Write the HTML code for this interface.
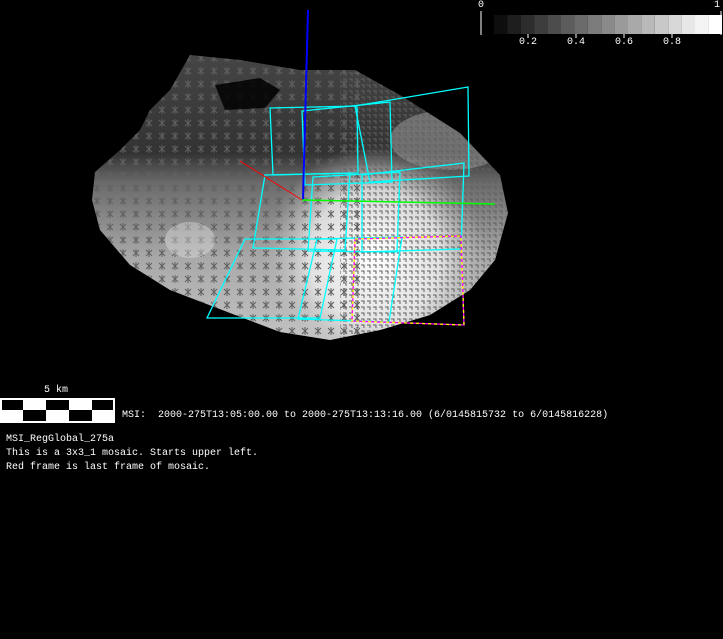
<!DOCTYPE html>
<html><head><meta charset="utf-8"><style>
html,body{margin:0;padding:0;background:#000;width:723px;height:639px;overflow:hidden}
.t{position:absolute;color:#fff;font-family:"Liberation Mono",monospace;font-size:10px;white-space:pre;line-height:14px}
</style></head><body>
<svg width="723" height="639" style="position:absolute;left:0;top:0">
<defs>
<linearGradient id="g" x1="0" y1="0" x2="0" y2="1">
<stop offset="0" stop-color="#464646"/>
<stop offset="0.35" stop-color="#333"/>
<stop offset="0.45" stop-color="#6a6a6a"/>
<stop offset="0.7" stop-color="#a8a8a8"/>
<stop offset="1" stop-color="#c4c4c4"/>
</linearGradient>
<radialGradient id="rg" cx="0.5" cy="0.55" r="0.5">
<stop offset="0" stop-color="#fff" stop-opacity="1"/>
<stop offset="0.6" stop-color="#eee" stop-opacity="0.8"/>
<stop offset="1" stop-color="#bbb" stop-opacity="0"/>
</radialGradient>
<pattern id="st" width="13" height="13" patternUnits="userSpaceOnUse">
<path d="M3 3L9 9M3 9L9 3M6 2V10" stroke="#606060" stroke-width="1"/>
</pattern>
<pattern id="st2" width="6" height="6" patternUnits="userSpaceOnUse">
<path d="M1 1H4V4" stroke="#606060" stroke-width="1" fill="none"/>
</pattern>
<clipPath id="cp"><path d="M170,90 L190,55 L240,60 L300,70 L355,70 L400,95 L460,133 L500,175 L508,213 L495,260 L470,290 L430,315 L380,330 L330,340 L280,332 L230,313 L170,290 L130,265 L100,230 L92,200 L95,172 L120,150 L140,130 L150,110 Z"/></clipPath>
</defs>
<g clip-path="url(#cp)">
<rect x="90" y="50" width="425" height="295" fill="url(#g)"/>
<ellipse cx="375" cy="245" rx="110" ry="110" fill="url(#rg)"/>
<ellipse cx="450" cy="140" rx="60" ry="30" fill="#999" opacity="0.6"/>
<rect x="90" y="50" width="270" height="295" fill="url(#st)"/>
<rect x="340" y="50" width="175" height="295" fill="url(#st2)"/>
<path d="M215,85 L260,78 L280,90 L265,108 L225,110 Z" fill="#000" opacity="0.85"/>
<ellipse cx="190" cy="240" rx="25" ry="18" fill="#e6e6e6" opacity="0.4"/>
</g>
<g fill="none" stroke="#00ffff" stroke-width="1.3">
<path d="M270,108L357,106L358,173L273,175Z"/>
<path d="M302,111L390,102L392,182L305,185Z"/>
<path d="M355,106L468,87L469,176L370,182Z"/>
<path d="M265,175L350,173L345,250L253,248Z"/>
<path d="M313,177L400,172L397,252L308,251Z"/>
<path d="M362,175L464,163L461,249L362,252Z"/>
<path d="M245,239L337,239L320,318L207,318Z"/>
<path d="M317,239L402,237L389,322L298,319Z"/>
</g>
<path d="M355,239L461,236L464,325L352,321Z" fill="none" stroke="#ff00ff" stroke-width="1.3"/>
<path d="M355,239L461,236L464,325L352,321Z" fill="none" stroke="#ffff00" stroke-width="1.3" stroke-dasharray="3 3"/>
<path d="M308,10L303,200" stroke="#0000ff" stroke-width="2"/>
<path d="M240,161L302,200" stroke="#ff0000" stroke-width="1"/>
<path d="M302,200L495,204" stroke="#00ff00" stroke-width="1.5"/>
<g>
<rect x="494" y="15" width="13.4" height="19" fill="#0e0e0e"/>
<rect x="507.4" y="15" width="13.4" height="19" fill="#1e1e1e"/>
<rect x="520.8" y="15" width="13.4" height="19" fill="#2d2d2d"/>
<rect x="534.2" y="15" width="13.4" height="19" fill="#3d3d3d"/>
<rect x="547.6" y="15" width="13.4" height="19" fill="#4c4c4c"/>
<rect x="561" y="15" width="13.4" height="19" fill="#5c5c5c"/>
<rect x="574.4" y="15" width="13.4" height="19" fill="#6b6b6b"/>
<rect x="587.8" y="15" width="13.4" height="19" fill="#7b7b7b"/>
<rect x="601.2" y="15" width="13.4" height="19" fill="#8a8a8a"/>
<rect x="614.6" y="15" width="13.4" height="19" fill="#9a9a9a"/>
<rect x="628" y="15" width="13.4" height="19" fill="#a9a9a9"/>
<rect x="641.4" y="15" width="13.4" height="19" fill="#b9b9b9"/>
<rect x="654.8" y="15" width="13.4" height="19" fill="#c8c8c8"/>
<rect x="668.2" y="15" width="13.4" height="19" fill="#d8d8d8"/>
<rect x="681.6" y="15" width="13.4" height="19" fill="#e7e7e7"/>
<rect x="695" y="15" width="13.4" height="19" fill="#f4f4f4"/>
<rect x="708.4" y="15" width="13.6" height="19" fill="#ffffff"/>
<path d="M481,11V35M721,11V35M528,34V38M576,34V38M624,34V38M672,34V38" stroke="#fff" stroke-width="1"/>
</g>
<rect x="0.5" y="398.5" width="114" height="24" fill="#fff" stroke="#fff"/>
<g fill="#000">
<rect x="2" y="400" width="21" height="10"/><rect x="46" y="400" width="23" height="10"/><rect x="92" y="400" width="21" height="10"/>
<rect x="23" y="410" width="23" height="11"/><rect x="69" y="410" width="23" height="11"/>
</g>
</svg>
<div class="t" style="left:478px;top:-1px">0</div>
<div class="t" style="left:714px;top:-1px">1</div>
<div class="t" style="left:519px;top:36px">0.2</div>
<div class="t" style="left:567px;top:36px">0.4</div>
<div class="t" style="left:615px;top:36px">0.6</div>
<div class="t" style="left:663px;top:36px">0.8</div>
<div class="t" style="left:44px;top:384px">5 km</div>
<div class="t" style="left:122px;top:409px">MSI:  2000-275T13:05:00.00 to 2000-275T13:13:16.00 (6/0145815732 to 6/0145816228)</div>
<div class="t" style="left:6px;top:433px">MSI_RegGlobal_275a
This is a 3x3_1 mosaic. Starts upper left.
Red frame is last frame of mosaic.</div>
</body></html>
